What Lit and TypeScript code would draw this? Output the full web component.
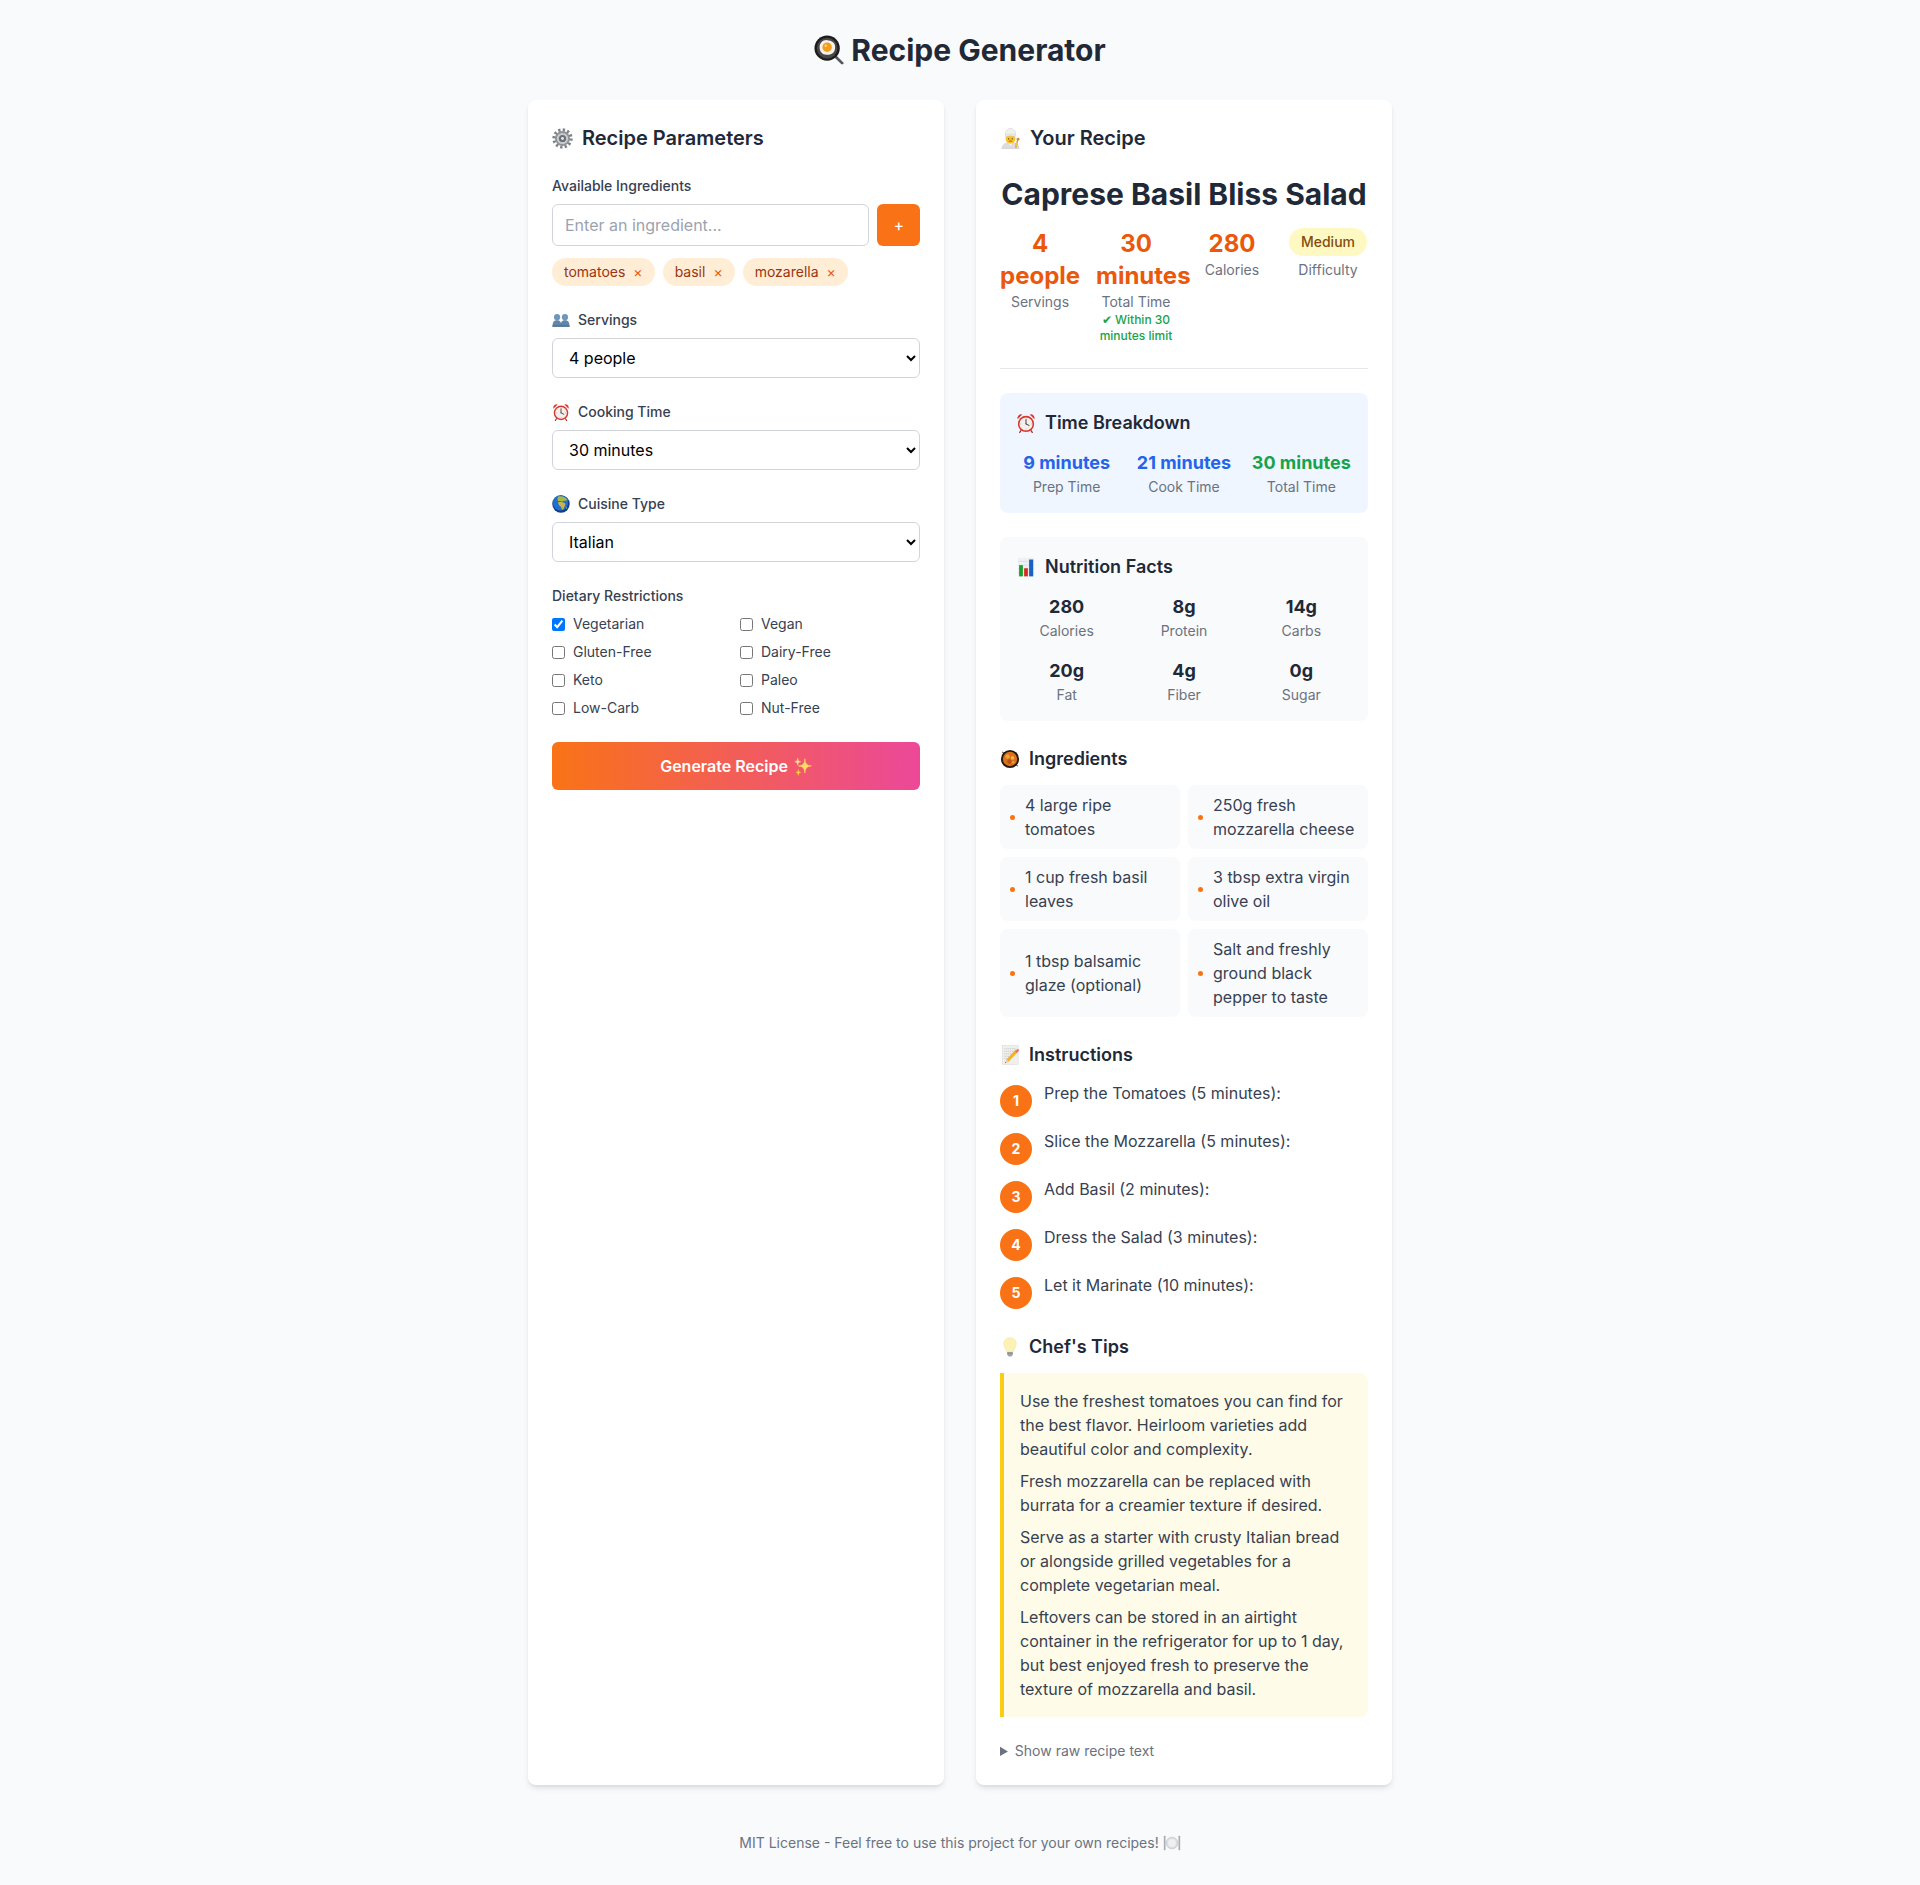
import { LitElement, html, css } from 'lit';
import { customElement, state } from 'lit/decorators.js';

const DIETS = ['Vegetarian', 'Vegan', 'Gluten-Free', 'Dairy-Free', 'Keto', 'Paleo', 'Low-Carb', 'Nut-Free'];

const INGREDIENTS = [
  '4 large ripe tomatoes',
  '250g fresh mozzarella cheese',
  '1 cup fresh basil leaves',
  '3 tbsp extra virgin olive oil',
  '1 tbsp balsamic glaze (optional)',
  'Salt and freshly ground black pepper to taste',
];

const STEPS = [
  'Prep the Tomatoes (5 minutes):',
  'Slice the Mozzarella (5 minutes):',
  'Add Basil (2 minutes):',
  'Dress the Salad (3 minutes):',
  'Let it Marinate (10 minutes):',
];

const TIPS = [
  'Use the freshest tomatoes you can find for the best flavor. Heirloom varieties add beautiful color and complexity.',
  'Fresh mozzarella can be replaced with burrata for a creamier texture if desired.',
  'Serve as a starter with crusty Italian bread or alongside grilled vegetables for a complete vegetarian meal.',
  'Leftovers can be stored in an airtight container in the refrigerator for up to 1 day, but best enjoyed fresh to preserve the texture of mozzarella and basil.',
];

const NUTRITION = [
  ['280', 'Calories'],
  ['8g', 'Protein'],
  ['14g', 'Carbs'],
  ['20g', 'Fat'],
  ['4g', 'Fiber'],
  ['0g', 'Sugar'],
];

// the emoji in the design, drawn on a 32 unit square
const ICONS = {
  pan: html`<svg class="ico" viewBox="0 0 32 32">
    <path d="M21 21l9 9" stroke="#55585c" stroke-width="3" stroke-linecap="round" />
    <circle cx="14" cy="14" r="13.5" fill="#1c1c1e" />
    <circle cx="14" cy="14" r="11" fill="#47474a" />
    <path d="M6 13c0-5 4-8 8-7.500 5 0 9 3 8.500 8 0 5-4 8-9 7.500-5 0-7.500-3.500-7.500-8z" fill="#f6f2e7" />
    <circle cx="14" cy="13" r="5" fill="#f39c1e" />
    <circle cx="12.500" cy="11.500" r="1.300" fill="#fbd77e" />
  </svg>`,
  gear: html`<svg class="ico" viewBox="0 0 32 32">
    <circle cx="16" cy="16" r="13" fill="none" stroke="#7b8086" stroke-width="5" stroke-dasharray="3.400 3.400" />
    <circle cx="16" cy="16" r="11.500" fill="#8f9499" />
    <circle cx="16" cy="16" r="8.500" fill="#c9ccd0" />
    <circle cx="16" cy="16" r="5.500" fill="#6b6f75" />
    <circle cx="16" cy="16" r="2.200" fill="#e9e9e9" />
  </svg>`,
  chef: html`<svg class="ico" viewBox="0 0 32 32">
    <path d="M3 32c0-7 5-10 13-10s13 3 13 10z" fill="#dcdcdc" stroke="#c4c4c4" stroke-width="0.600" />
    <path d="M12 22l4 5 4-5z" fill="#f6f6f6" />
    <circle cx="16" cy="16.500" r="7.500" fill="#fcc22e" />
    <circle cx="13.300" cy="16.500" r="1" fill="#3b2a1a" />
    <circle cx="18.700" cy="16.500" r="1" fill="#3b2a1a" />
    <path d="M13.500 20.500c1.500-1 3.500-1 5 0" stroke="#7a4f22" stroke-width="1.300" fill="none" />
    <path d="M8.500 13V7a5 5 0 0 1 3-4.500 6 6 0 0 1 9 0 5 5 0 0 1 3 4.500v6c-5-1.500-10-1.500-15 0z" fill="#f1f1f1" stroke="#c8c8c8" stroke-width="0.700" />
    <path d="M8.500 10.500c5-1.500 10-1.500 15 0" stroke="#c8c8c8" stroke-width="0.700" fill="none" />
    <path d="M27 18l-3 12" stroke="#d18a45" stroke-width="2" />
    <circle cx="27.500" cy="17" r="2.200" fill="#d18a45" />
    <circle cx="25" cy="25" r="2.500" fill="#fcc22e" />
  </svg>`,
  busts: html`<svg class="ico" viewBox="0 0 32 32">
    <circle cx="9" cy="11" r="5.500" fill="#6f97bc" />
    <path d="M1 27c0-8 3-10.500 8-10.500s7.500 2.500 7.500 10.500z" fill="#5f87ad" />
    <circle cx="23" cy="11" r="5.500" fill="#6f97bc" />
    <path d="M15.500 27c0-8 2.500-10.500 7.500-10.500s8 2.500 8 10.500z" fill="#5f87ad" />
    <rect x="0.500" y="26" width="31" height="2" fill="#3f5f7e" />
  </svg>`,
  clock: html`<svg class="ico" viewBox="0 0 32 32">
    <path d="M8 28l-2 3M24 28l2 3" stroke="#a8221c" stroke-width="2" stroke-linecap="round" />
    <path d="M2.500 10a6 6 0 0 1 7.500-7.500zM29.500 10a6 6 0 0 0-7.500-7.500z" fill="#d9362d" />
    <circle cx="16" cy="17.500" r="13" fill="#d9362d" />
    <circle cx="16" cy="17.500" r="10.500" fill="#f5efec" />
    <path d="M16 17.500V10.500M16 17.500l5 2.500" stroke="#33363a" stroke-width="1.500" stroke-linecap="round" />
    <path d="M16 8.500v1.300M16 25.200v1.300M7 17.500h1.300M23.700 17.500H25" stroke="#8a8d90" stroke-width="1" />
  </svg>`,
  globe: html`<svg class="ico" viewBox="0 0 32 32">
    <circle cx="16" cy="16" r="15.500" fill="#123f88" />
    <circle cx="15" cy="14" r="13.500" fill="#1f6fd0" />
    <path d="M11 3c5-2 13 0 17 6-3 2-6 1-8 2-3 1.500-6-1-9 0-1.500-3-1.500-6 0-8z" fill="#a8b93e" />
    <path d="M11 13c4-1.500 10-.500 12.500 2 1 4-2 6-3 10-2 2.500-3.500 0-4.500-4-2.500-1-5.500-4.500-5-8z" fill="#c9b34a" />
    <path d="M25 22c1.500-1 2.500 0 2 1.500-1 1.500-2.500 1-2-1.500z" fill="#8fae3c" />
  </svg>`,
  sparkles: html`<svg class="ico" viewBox="0 0 32 32">
    <path d="M20 3Q20 15 31 15 20 15 20 27 20 15 9 15 20 15 20 3z" fill="#ffdf63" stroke="#ffdf63" stroke-width="1" />
    <path d="M8 2Q8 8 13 8 8 8 8 14 8 8 3 8 8 8 8 2z" fill="#ffe58a" stroke="#ffe58a" stroke-width="0.800" />
    <path d="M9 21Q9 26 13 26 9 26 9 31 9 26 5 26 9 26 9 21z" fill="#ffd23e" stroke="#ffd23e" stroke-width="0.800" />
  </svg>`,
  chart: html`<svg class="ico" viewBox="0 0 32 32">
    <rect x="3" y="1" width="26" height="30" fill="#eef1f4" />
    <path d="M3 7h26M3 13h26M3 19h26M3 25h26" stroke="#c9d3dc" stroke-width="0.800" />
    <rect x="5" y="13" width="6" height="18" fill="#1c9e2c" />
    <rect x="13" y="18" width="6" height="13" fill="#d62c20" />
    <rect x="21" y="4" width="6.500" height="27" fill="#1d5fc2" />
  </svg>`,
  pot: html`<svg class="ico" viewBox="0 0 32 32">
    <path d="M4 5l3 3M28 27l-3-3" stroke="#777" stroke-width="2" stroke-linecap="round" />
    <circle cx="16" cy="16" r="14.500" fill="#24170e" />
    <circle cx="16" cy="16" r="11.500" fill="#d8701c" />
    <circle cx="12" cy="12" r="3.500" fill="#efa437" />
    <circle cx="20" cy="14" r="3" fill="#f0b24a" />
    <circle cx="15" cy="20" r="3.500" fill="#b94f17" />
    <circle cx="21" cy="21" r="2" fill="#efa437" />
  </svg>`,
  memo: html`<svg class="ico" viewBox="0 0 32 32">
    <rect x="4" y="1" width="25" height="30" fill="#efefec" stroke="#d0d0cc" stroke-width="0.700" />
    <path d="M7 6h19M7 10h19M7 14h19M7 18h12M7 22h8" stroke="#b8b8b4" stroke-width="1" stroke-dasharray="2 1" />
    <path d="M27 9L12 25" stroke="#f3b42a" stroke-width="5" />
    <path d="M28.500 7.400l1 1-3 3-1-1z" fill="#e5736b" stroke="#e5736b" stroke-width="2" />
    <path d="M10 23l4 4-6 2.500z" fill="#e9cfa5" />
    <path d="M8.800 27l1 1-2 1z" fill="#333" />
  </svg>`,
  bulb: html`<svg class="ico" viewBox="0 0 32 32">
    <path d="M16 1c6 0 10 4.500 10 10 0 5-4 7.500-5 13H11c-1-5.500-5-8-5-13C6 5.500 10 1 16 1z" fill="#fdf2b5" stroke="#efdf94" stroke-width="0.800" />
    <path d="M11.500 24h9v4.500l-2.500 2.500h-4l-2.500-2.500z" fill="#9ea3a6" />
    <path d="M11.500 26h9" stroke="#71767a" stroke-width="0.800" />
  </svg>`,
  plate: html`<svg class="ico" viewBox="0 0 32 32">
    <rect x="1.500" y="3" width="3" height="26" rx="1" fill="#a9aeb3" />
    <rect x="27.500" y="3" width="3" height="26" rx="1" fill="#a9aeb3" />
    <circle cx="16" cy="16" r="10.500" fill="#d9dde0" stroke="#b4b9bd" stroke-width="0.800" />
    <circle cx="16" cy="16" r="7" fill="#eef0f1" />
  </svg>`,
};

@customElement('app-root')
export class AppRoot extends LitElement {
  static styles = css`
    :host {
      display: block;
      background: #f9fafb;
      color: #1f2937;
      font-family: Inter, 'Noto Sans', sans-serif;
      font-size: 16px;
      line-height: 24px;
    }

    * {
      box-sizing: border-box;
    }

    h1, h2, h3, p {
      margin: 0;
    }

    .ico {
      flex: none;
      display: block;
    }

    .page {
      width: 864px;
      margin: 0 auto;
      padding-top: 32px;
    }

    .page-title {
      display: flex;
      justify-content: center;
      align-items: center;
      font-size: 30px;
      line-height: 36px;
      font-weight: 700;
      margin-bottom: 32px;
    }

    .page-title .ico {
      width: 30px;
      height: 30px;
      margin-right: 7px;
    }

    .columns {
      display: grid;
      grid-template-columns: 1fr 1fr;
      gap: 32px;
    }

    .card {
      background: #fff;
      border-radius: 8px;
      padding: 24px;
      box-shadow: 0 4px 6px -1px rgba(0, 0, 0, 0.1), 0 2px 4px -2px rgba(0, 0, 0, 0.1);
      min-width: 0;
    }

    .card-title {
      display: flex;
      align-items: center;
      font-size: 20px;
      line-height: 28px;
      font-weight: 600;
      margin-bottom: 24px;
    }

    .card-title .ico {
      width: 21px;
      height: 21px;
      margin-right: 9px;
    }

    .field {
      margin-bottom: 24px;
    }

    .field-label {
      display: flex;
      align-items: center;
      height: 20px;
      font-size: 14px;
      line-height: 20px;
      font-weight: 500;
      color: #374151;
      margin-bottom: 8px;
    }

    .field-label .ico {
      width: 18px;
      height: 18px;
      margin-right: 8px;
    }

    .add-row {
      display: flex;
      gap: 8px;
    }

    .text-input {
      flex: 1;
      min-width: 0;
      height: 42px;
      padding: 8px 12px;
      border: 1px solid #d1d5db;
      border-radius: 6px;
      font: inherit;
      color: #1f2937;
    }

    .text-input::placeholder {
      color: #9ca3af;
    }

    .add-btn {
      height: 42px;
      padding: 0 16px;
      border: 0;
      border-radius: 6px;
      background: #f97316;
      color: #fff;
      font: inherit;
      cursor: pointer;
    }

    .tags {
      display: flex;
      flex-wrap: wrap;
      gap: 8px;
      margin-top: 12px;
    }

    .tag {
      display: inline-flex;
      align-items: center;
      padding: 4px 12px;
      border-radius: 999px;
      background: #ffedd5;
      color: #9a3412;
      font-size: 14px;
      line-height: 20px;
    }

    .tag-remove {
      margin-left: 8px;
      color: #ea580c;
      cursor: pointer;
    }

    .select {
      display: block;
      width: 100%;
      height: 40px;
      padding: 8px 12px;
      border: 1px solid #d1d5db;
      border-radius: 6px;
      background: #fff;
      color: #000;
      font: inherit;
    }

    .diets {
      display: grid;
      grid-template-columns: 1fr 1fr;
      gap: 8px;
    }

    .diet {
      display: flex;
      align-items: center;
      gap: 8px;
      font-size: 14px;
      line-height: 20px;
      color: #374151;
    }

    .diet input {
      margin: 0;
      width: 13px;
      height: 13px;
    }

    .generate {
      display: flex;
      justify-content: center;
      align-items: center;
      width: 100%;
      height: 48px;
      border: 0;
      border-radius: 6px;
      background: linear-gradient(to right, #f97316, #ec4899);
      color: #fff;
      font: inherit;
      font-weight: 600;
      cursor: pointer;
    }

    .generate .ico {
      width: 19px;
      height: 19px;
      margin-left: 5px;
    }

    .recipe-name {
      font-size: 30px;
      line-height: 36px;
      font-weight: 700;
      text-align: center;
      margin-bottom: 16px;
    }

    .stats {
      display: grid;
      grid-template-columns: repeat(4, minmax(0, 1fr));
      gap: 16px;
      padding-bottom: 24px;
      border-bottom: 1px solid #e5e7eb;
      margin-bottom: 24px;
      text-align: center;
    }

    .stat-value {
      font-size: 24px;
      line-height: 32px;
      font-weight: 700;
      color: #ea580c;
    }

    .stat-label {
      font-size: 14px;
      line-height: 20px;
      color: #6b7280;
    }

    .stat-note {
      font-size: 12px;
      line-height: 16px;
      font-weight: 500;
      color: #16a34a;
    }

    .check {
      display: inline-block;
      margin-right: 3px;
      font-family: 'DejaVu Sans', sans-serif;
      font-size: 12px;
      line-height: 1;
    }

    .pill-slot {
      display: flex;
      justify-content: center;
      align-items: flex-start;
      height: 32px;
    }

    .pill {
      padding: 4px 12px;
      border-radius: 999px;
      background: #fef9c3;
      color: #854d0e;
      font-size: 14px;
      line-height: 20px;
      font-weight: 500;
      white-space: nowrap;
    }

    .panel {
      border-radius: 8px;
      padding: 16px;
      margin-bottom: 24px;
      background: #f9fafb;
    }

    .panel.time {
      background: #eff6ff;
    }

    .section-title {
      display: flex;
      align-items: center;
      font-size: 18px;
      line-height: 28px;
      font-weight: 600;
      margin-bottom: 12px;
    }

    .section-title .ico {
      width: 20px;
      height: 20px;
      margin-right: 9px;
    }

    .metrics {
      display: grid;
      grid-template-columns: repeat(3, minmax(0, 1fr));
      gap: 16px;
      text-align: center;
    }

    .metric-value {
      font-size: 18px;
      line-height: 28px;
      font-weight: 700;
    }

    .metric-value.blue {
      color: #2563eb;
    }

    .metric-value.green {
      color: #16a34a;
    }

    .metric-label {
      font-size: 14px;
      line-height: 20px;
      color: #6b7280;
    }

    .section {
      margin-bottom: 24px;
    }

    .ingredients {
      display: grid;
      grid-template-columns: 1fr 1fr;
      gap: 8px;
    }

    .ingredient {
      display: flex;
      align-items: center;
      padding: 8px;
      border-radius: 8px;
      background: #f9fafb;
      color: #374151;
    }

    .bullet {
      flex: none;
      width: 5px;
      height: 5px;
      margin: 1px 10px 0 2px;
      border-radius: 50%;
      background: #f97316;
    }

    .steps {
      display: flex;
      flex-direction: column;
      gap: 12px;
    }

    .step {
      display: flex;
      align-items: flex-start;
      gap: 12px;
      color: #374151;
    }

    .step-num {
      flex: none;
      display: flex;
      align-items: center;
      justify-content: center;
      width: 32px;
      height: 32px;
      margin-top: 4px;
      border-radius: 50%;
      background: #f97316;
      color: #fff;
      font-size: 14px;
      line-height: 20px;
      font-weight: 700;
    }

    .tips {
      display: flex;
      flex-direction: column;
      gap: 8px;
      padding: 16px;
      border-left: 4px solid #facc15;
      border-radius: 0 8px 8px 0;
      background: #fefce8;
      color: #374151;
    }

    .raw {
      font-size: 14px;
      line-height: 20px;
      color: #6b7280;
    }

    .raw summary {
      cursor: pointer;
    }

    .footer {
      display: flex;
      justify-content: center;
      align-items: center;
      margin-top: 48px;
      padding-bottom: 32px;
      font-size: 14px;
      line-height: 20px;
      color: #6b7280;
    }

    .footer .ico {
      width: 18px;
      height: 18px;
      margin-left: 4px;
    }
  `;

  @state() private tags = ['tomatoes', 'basil', 'mozarella'];

  private removeTag(tag: string) {
    this.tags = this.tags.filter((t) => t !== tag);
  }

  private field(icon: unknown, label: string, value: string, options: string[]) {
    return html`
      <div class="field">
        <label class="field-label">${icon}${label}</label>
        <select class="select">
          ${options.map((o) => html`<option ?selected=${o === value}>${o}</option>`)}
        </select>
      </div>
    `;
  }

  private renderForm() {
    return html`
      <section class="card">
        <h2 class="card-title">${ICONS.gear}Recipe Parameters</h2>

        <div class="field">
          <label class="field-label">Available Ingredients</label>
          <div class="add-row">
            <input class="text-input" type="text" placeholder="Enter an ingredient..." />
            <button class="add-btn">+</button>
          </div>
          <div class="tags">
            ${this.tags.map(
              (t) => html`<span class="tag">${t}<span class="tag-remove" @click=${() => this.removeTag(t)}>×</span></span>`
            )}
          </div>
        </div>

        ${this.field(ICONS.busts, 'Servings', '4 people', ['2 people', '4 people', '6 people'])}
        ${this.field(ICONS.clock, 'Cooking Time', '30 minutes', ['15 minutes', '30 minutes', '60 minutes'])}
        ${this.field(ICONS.globe, 'Cuisine Type', 'Italian', ['Italian', 'Mexican', 'Indian'])}

        <div class="field">
          <label class="field-label">Dietary Restrictions</label>
          <div class="diets">
            ${DIETS.map(
              (d) => html`<label class="diet"><input type="checkbox" ?checked=${d === 'Vegetarian'} />${d}</label>`
            )}
          </div>
        </div>

        <button class="generate">Generate Recipe${ICONS.sparkles}</button>
      </section>
    `;
  }

  private renderRecipe() {
    return html`
      <section class="card">
        <h2 class="card-title">${ICONS.chef}Your Recipe</h2>
        <h1 class="recipe-name">Caprese Basil Bliss Salad</h1>

        <div class="stats">
          <div>
            <div class="stat-value">4 people</div>
            <div class="stat-label">Servings</div>
          </div>
          <div>
            <div class="stat-value">30 minutes</div>
            <div class="stat-label">Total Time</div>
            <div class="stat-note"><span class="check">✔</span>Within 30 minutes limit</div>
          </div>
          <div>
            <div class="stat-value">280</div>
            <div class="stat-label">Calories</div>
          </div>
          <div>
            <div class="pill-slot"><span class="pill">Medium</span></div>
            <div class="stat-label">Difficulty</div>
          </div>
        </div>

        <div class="panel time">
          <h3 class="section-title">${ICONS.clock}Time Breakdown</h3>
          <div class="metrics">
            <div><div class="metric-value blue">9 minutes</div><div class="metric-label">Prep Time</div></div>
            <div><div class="metric-value blue">21 minutes</div><div class="metric-label">Cook Time</div></div>
            <div><div class="metric-value green">30 minutes</div><div class="metric-label">Total Time</div></div>
          </div>
        </div>

        <div class="panel">
          <h3 class="section-title">${ICONS.chart}Nutrition Facts</h3>
          <div class="metrics">
            ${NUTRITION.map(
              ([v, l]) => html`<div><div class="metric-value">${v}</div><div class="metric-label">${l}</div></div>`
            )}
          </div>
        </div>

        <div class="section">
          <h3 class="section-title">${ICONS.pot}Ingredients</h3>
          <div class="ingredients">
            ${INGREDIENTS.map((i) => html`<div class="ingredient"><span class="bullet"></span><span>${i}</span></div>`)}
          </div>
        </div>

        <div class="section">
          <h3 class="section-title">${ICONS.memo}Instructions</h3>
          <div class="steps">
            ${STEPS.map(
              (s, n) => html`<div class="step"><span class="step-num">${n + 1}</span><span>${s}</span></div>`
            )}
          </div>
        </div>

        <div class="section">
          <h3 class="section-title">${ICONS.bulb}Chef's Tips</h3>
          <div class="tips">${TIPS.map((t) => html`<p>${t}</p>`)}</div>
        </div>

        <details class="raw">
          <summary>Show raw recipe text</summary>
        </details>
      </section>
    `;
  }

  render() {
    return html`
      <div class="page">
        <h1 class="page-title">${ICONS.pan}Recipe Generator</h1>
        <div class="columns">${this.renderForm()}${this.renderRecipe()}</div>
        <footer class="footer">MIT License - Feel free to use this project for your own recipes!${ICONS.plate}</footer>
      </div>
    `;
  }
}
